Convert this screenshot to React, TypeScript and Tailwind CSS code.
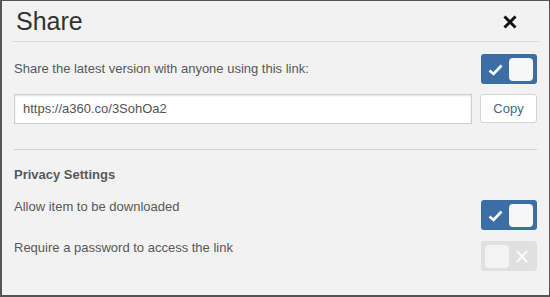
import React, { FC } from 'react'

const font = { fontFamily: '"Liberation Sans", Arial, sans-serif' }

const Toggle: FC<{ on: boolean }> = ({ on }) => {
  if (on) {
    return (
      <div className="flex h-[30px] w-[56px] shrink-0 items-center justify-between rounded-[3px] bg-[#3c6ea6] pl-[7px] pr-[4px]">
        <svg width="15" height="12" viewBox="0 0 15 12" className="mt-[2px]">
          <path d="M1.5 6.5 L5.5 10 L13.5 1.5" fill="none" stroke="#fff" strokeWidth="2.6" />
        </svg>
        <div className="h-[23px] w-[24px] rounded-[4px] bg-[#f7f7f7]" />
      </div>
    )
  }
  return (
    <div className="flex h-[30px] w-[56px] shrink-0 items-center justify-between rounded-[3px] bg-[#e0e0e0] pl-[4px] pr-[9px]">
      <div className="h-[23px] w-[24px] rounded-[4px] bg-[#f3f3f3]" />
      <svg width="12" height="13" viewBox="0 0 12 13">
        <path d="M1 1 L11 12 M11 1 L1 12" fill="none" stroke="#fafafa" strokeWidth="2" />
      </svg>
    </div>
  )
}

const App: FC = () => {
  return (
    <div
      style={font}
      className="flex h-[297px] w-[550px] flex-col border-t border-r border-b-2 border-l-2 border-[#555] bg-[#f2f2f2]"
    >
      <div className="mx-[10px] flex h-[41px] items-center justify-between border-b border-[#dcdcdc] pl-[4px] pr-[22px]">
        <h1 className="text-[25px] leading-none text-[#333] mt-[1px]">Share</h1>
        <svg width="14" height="14" viewBox="0 0 14 14" className="mt-[2px]">
          <path d="M1.5 1.5 L12.5 12.5 M12.5 1.5 L1.5 12.5" fill="none" stroke="#111" strokeWidth="3" />
        </svg>
      </div>

      <div className="flex flex-col pl-[12px] pr-[12px] pt-[12px] text-[13px] leading-4 text-[#595959]">
        <div className="flex items-center justify-between">
          <span>Share the latest version with anyone using this link:</span>
          <Toggle on />
        </div>

        <div className="mt-[10px] flex gap-[8px]">
          <div className="flex h-[30px] flex-1 items-center border border-[#cfcfcf] bg-white pl-[8px] text-[#555] shadow-[inset_0_1px_2px_rgba(0,0,0,0.12)]">
            https://a360.co/3SohOa2
          </div>
          <button className="h-[29px] w-[57px] rounded-[3px] border border-[#d4d4d4] bg-white text-[13px] text-[#4a6584]">
            Copy
          </button>
        </div>

        <div className="mt-[25px] h-px bg-[#d2d2d2]" />

        <div className="mt-[17px] font-bold">Privacy Settings</div>

        <div className="mt-[16px] flex items-start justify-between">
          <span>Allow item to be downloaded</span>
          <div className="mt-[1px]">
            <Toggle on />
          </div>
        </div>

        <div className="mt-[10px] flex items-start justify-between">
          <span>Require a password to access the link</span>
          <div className="mt-[1px]">
            <Toggle on={false} />
          </div>
        </div>
      </div>
    </div>
  )
}

export default App
